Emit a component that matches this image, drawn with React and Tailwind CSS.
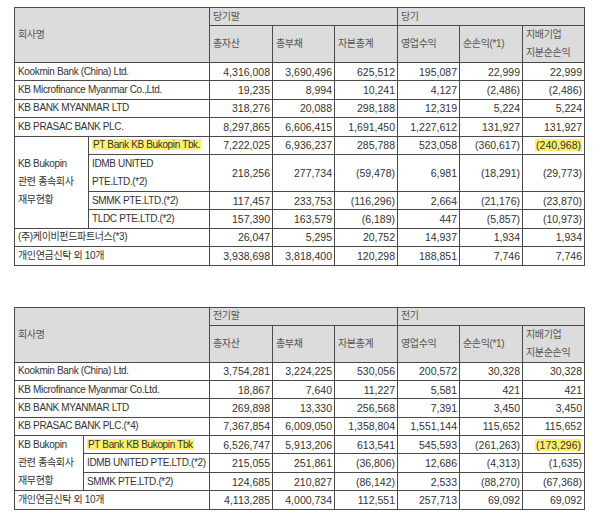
import React from "react";

const font = { fontFamily: '"Liberation Sans", "Noto Sans CJK KR", sans-serif' };

const t1 = {
  top: ["당기말", "당기"],
  rows: [
    ["Kookmin Bank (China) Ltd.", "4,316,008", "3,690,496", "625,512", "195,087", "22,999", "22,999"],
    ["KB Microfinance Myanmar Co.,Ltd.", "19,235", "8,994", "10,241", "4,127", "(2,486)", "(2,486)"],
    ["KB BANK MYANMAR LTD", "318,276", "20,088", "298,188", "12,319", "5,224", "5,224"],
    ["KB PRASAC BANK PLC.", "8,297,865", "6,606,415", "1,691,450", "1,227,612", "131,927", "131,927"],
  ],
  group: [
    { name: ["PT Bank KB Bukopin Tbk."], hl: true, v: ["7,222,025", "6,936,237", "285,788", "523,058", "(360,617)", "(240,968)"] },
    { name: ["IDMB UNITED", "PTE.LTD.(*2)"], v: ["218,256", "277,734", "(59,478)", "6,981", "(18,291)", "(29,773)"] },
    { name: ["SMMK PTE.LTD.(*2)"], v: ["117,457", "233,753", "(116,296)", "2,664", "(21,176)", "(23,870)"] },
    { name: ["TLDC PTE.LTD.(*2)"], v: ["157,390", "163,579", "(6,189)", "447", "(5,857)", "(10,973)"] },
  ],
  after: [
    ["(주)케이비펀드파트너스(*3)", "26,047", "5,295", "20,752", "14,937", "1,934", "1,934"],
    ["개인연금신탁 외 10개", "3,938,698", "3,818,400", "120,298", "188,851", "7,746", "7,746"],
  ],
  sub: "w-[74px]",
  name: "w-[121px]",
};

const t2 = {
  top: ["전기말", "전기"],
  rows: [
    ["Kookmin Bank (China) Ltd.", "3,754,281", "3,224,225", "530,056", "200,572", "30,328", "30,328"],
    ["KB Microfinance Myanmar Co.Ltd.", "18,867", "7,640", "11,227", "5,581", "421", "421"],
    ["KB BANK MYANMAR LTD", "269,898", "13,330", "256,568", "7,391", "3,450", "3,450"],
    ["KB PRASAC BANK PLC.(*4)", "7,367,854", "6,009,050", "1,358,804", "1,551,144", "115,652", "115,652"],
  ],
  group: [
    { name: ["PT Bank KB Bukopin Tbk"], hl: true, v: ["6,526,747", "5,913,206", "613,541", "545,593", "(261,263)", "(173,296)"] },
    { name: ["IDMB UNITED PTE.LTD.(*2)"], v: ["215,055", "251,861", "(36,806)", "12,686", "(4,313)", "(1,635)"] },
    { name: ["SMMK PTE.LTD.(*2)"], v: ["124,685", "210,827", "(86,142)", "2,533", "(88,270)", "(67,368)"] },
  ],
  after: [
    ["개인연금신탁 외 10개", "4,113,285", "4,000,734", "112,551", "257,713", "69,092", "69,092"],
  ],
  sub: "w-[69px]",
  name: "w-[126px]",
};

const B = "border border-[#4a4a4a] p-0 align-middle whitespace-nowrap overflow-hidden";
const NUM = `${B} text-right pr-[2px] text-[10.5px] leading-[14px]`;
const TXT = `${B} text-left pl-[3px] text-[10px] leading-[14px] tracking-[-0.35px]`;
const HL = "bg-[#fff06a] px-[1px]";

function Table({ d, className }) {
  return (
    <table
      className={`table-fixed border-collapse w-[570px] text-[#333] ${className || ""}`}
      style={font}
    >
      <colgroup>
        <col className={d.sub} />
        <col className={d.name} />
        <col className="w-[63px]" />
        <col className="w-[62px]" />
        <col className="w-[63px]" />
        <col className="w-[62px]" />
        <col className="w-[63px]" />
        <col className="w-[62px]" />
      </colgroup>
      <thead className="bg-[#dcdcdc] text-[#555]">
        <tr className="h-[18px]">
          <th rowSpan={2} colSpan={2} className={`${TXT} font-normal`}>회사명</th>
          <th colSpan={3} className={`${TXT} font-normal`}>{d.top[0]}</th>
          <th colSpan={3} className={`${TXT} font-normal`}>{d.top[1]}</th>
        </tr>
        <tr className="h-[37px]">
          <th className={`${TXT} font-normal`}>총자산</th>
          <th className={`${TXT} font-normal`}>총부채</th>
          <th className={`${TXT} font-normal`}>자본총계</th>
          <th className={`${TXT} font-normal`}>영업수익</th>
          <th className={`${TXT} font-normal`}>순손익(*1)</th>
          <th className={`${TXT} font-normal leading-[18px]`}>
            <div>지배기업</div>
            <div>지분순손익</div>
          </th>
        </tr>
      </thead>
      <tbody>
        {d.rows.map((r, i) => (
          <tr key={i} className="h-[18.4px]">
            <td colSpan={2} className={TXT}>{r[0]}</td>
            {r.slice(1).map((v, j) => (
              <td key={j} className={NUM}>{v}</td>
            ))}
          </tr>
        ))}
        {d.group.map((g, i) => (
          <tr key={"g" + i} className={g.name.length > 1 ? "h-[37px]" : "h-[18.4px]"}>
            {i === 0 && (
              <td rowSpan={d.group.length} className={`${TXT} leading-[18px]`}>
                <div>KB Bukopin</div>
                <div>관련 종속회사</div>
                <div>재무현황</div>
              </td>
            )}
            <td className={`${TXT} ${g.name.length > 1 ? "leading-[18px]" : ""}`}>
              {g.name.map((n, k) => (
                <div key={k}>
                  {g.hl ? <span className={HL}>{n}</span> : n}
                </div>
              ))}
            </td>
            {g.v.map((v, j) => (
              <td key={j} className={NUM}>
                {g.hl && j === 5 ? <span className={HL}>{v}</span> : v}
              </td>
            ))}
          </tr>
        ))}
        {d.after.map((r, i) => (
          <tr key={"a" + i} className="h-[18.4px]">
            <td colSpan={2} className={TXT}>{r[0]}</td>
            {r.slice(1).map((v, j) => (
              <td key={j} className={NUM}>{v}</td>
            ))}
          </tr>
        ))}
      </tbody>
    </table>
  );
}

export default function App() {
  return (
    <div className="bg-white w-[600px] h-[517px] pl-[14px] pt-[7px]">
      <Table d={t1} />
      <Table d={t2} className="mt-[41px]" />
    </div>
  );
}
